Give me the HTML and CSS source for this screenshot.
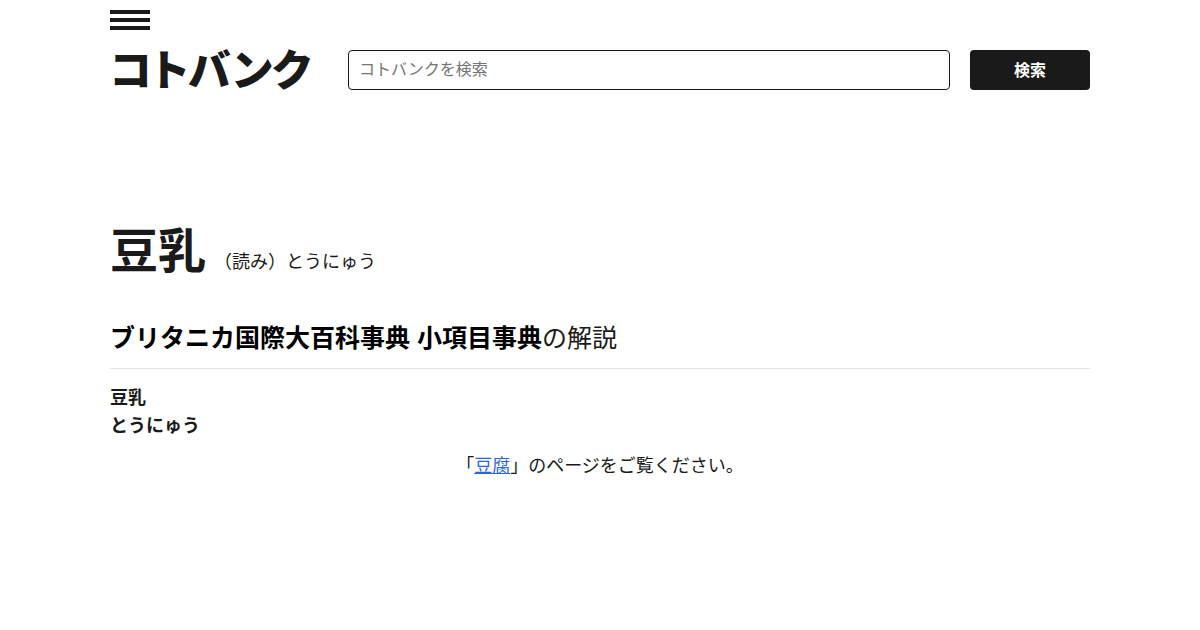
FILE: index.html
```
<!DOCTYPE html>
<html lang="ja">

<head>
    <meta charset="UTF-8">
    <meta name="viewport"
          content="width=device-width, initial-scale=1.0">
    <title>豆乳 - コトバンク</title>
    <link rel="stylesheet" href="styles.css">
</head>

<body>
    <div class="container">
        <header class="header">
            <button type="button"
                    class="menu-button"
                    aria-label="メニュー">
                <span></span>
                <span></span>
                <span></span>
            </button>
            <div class="header-main">
                <a class="logo" href="#">コトバンク</a>
                <form class="search">
                    <input type="text"
                           class="search-input"
                           aria-label="コトバンクを検索"
                           placeholder="コトバンクを検索">
                    <button type="submit" class="search-button">検索</button>
                </form>
            </div>
        </header>

        <main>
            <h1 class="title">豆乳<span class="yomi">（読み）とうにゅう</span></h1>
            <article>
                <h2 class="dictionary"><a href="#">ブリタニカ国際大百科事典 小項目事典</a>の解説</h2>
                <h3 class="entry">豆乳<br>とうにゅう</h3>
                <p class="description">「<a href="#">豆腐</a>」のページをご覧ください。</p>
            </article>
        </main>
    </div>
</body>

</html>
```

FILE: styles.css
```
body {
    margin: 0;
    color: #1a1a1a;
    background-color: #fff;
    font-family: "Liberation Sans", "Noto Sans CJK JP", sans-serif;
    font-size: 18px;
    line-height: 28px;
}

.container {
    max-width: 980px;
    margin: 0 auto;
}

.header {
    padding-top: 10px;
}

.menu-button {
    display: flex;
    flex-direction: column;
    gap: 4px;
    width: 40px;
    padding: 0;
    border: 0;
    background: none;
    cursor: pointer;
}

.menu-button span {
    width: 100%;
    height: 4px;
    background-color: #1a1a1a;
}

.header-main {
    display: flex;
    gap: 40px;
    margin-top: 20px;
}

.logo {
    width: 198px;
    color: #1a1a1a;
    font-size: 43px;
    font-weight: 900;
    font-feature-settings: "palt";
    line-height: 42px;
    text-decoration: none;
    white-space: nowrap;
}

.search {
    display: flex;
    flex: 1;
    gap: 20px;
}

.search-input {
    flex: 1;
    box-sizing: border-box;
    min-width: 0;
    height: 40px;
    padding: 0 10px;
    border: 1px solid #1a1a1a;
    border-radius: 4px;
    font-family: inherit;
    font-size: 16px;
}

.search-input::placeholder {
    color: #757575;
}

.search-button {
    width: 120px;
    height: 40px;
    padding: 0 0 2px;
    border: 0;
    border-radius: 4px;
    color: #fff;
    background-color: #1a1a1a;
    font-family: inherit;
    font-size: 16px;
    font-weight: bold;
    cursor: pointer;
}

.title {
    margin: 130px 0 0;
    font-size: 48px;
    line-height: 60px;
}

.yomi {
    margin-left: 8px;
    font-size: 18px;
    font-weight: normal;
}

.dictionary {
    margin: 28px 0 0;
    padding-bottom: 12px;
    border-bottom: 1px solid #e5e5e5;
    font-size: 25px;
    font-weight: normal;
    line-height: 36px;
}

.dictionary a {
    color: #000;
    font-weight: bold;
    text-decoration: none;
}

.entry {
    margin: 15px 0 0;
    font-size: 18px;
}

.description {
    margin: 12px 0 0;
    text-align: center;
}

.description a {
    color: #2b65d9;
}
```
